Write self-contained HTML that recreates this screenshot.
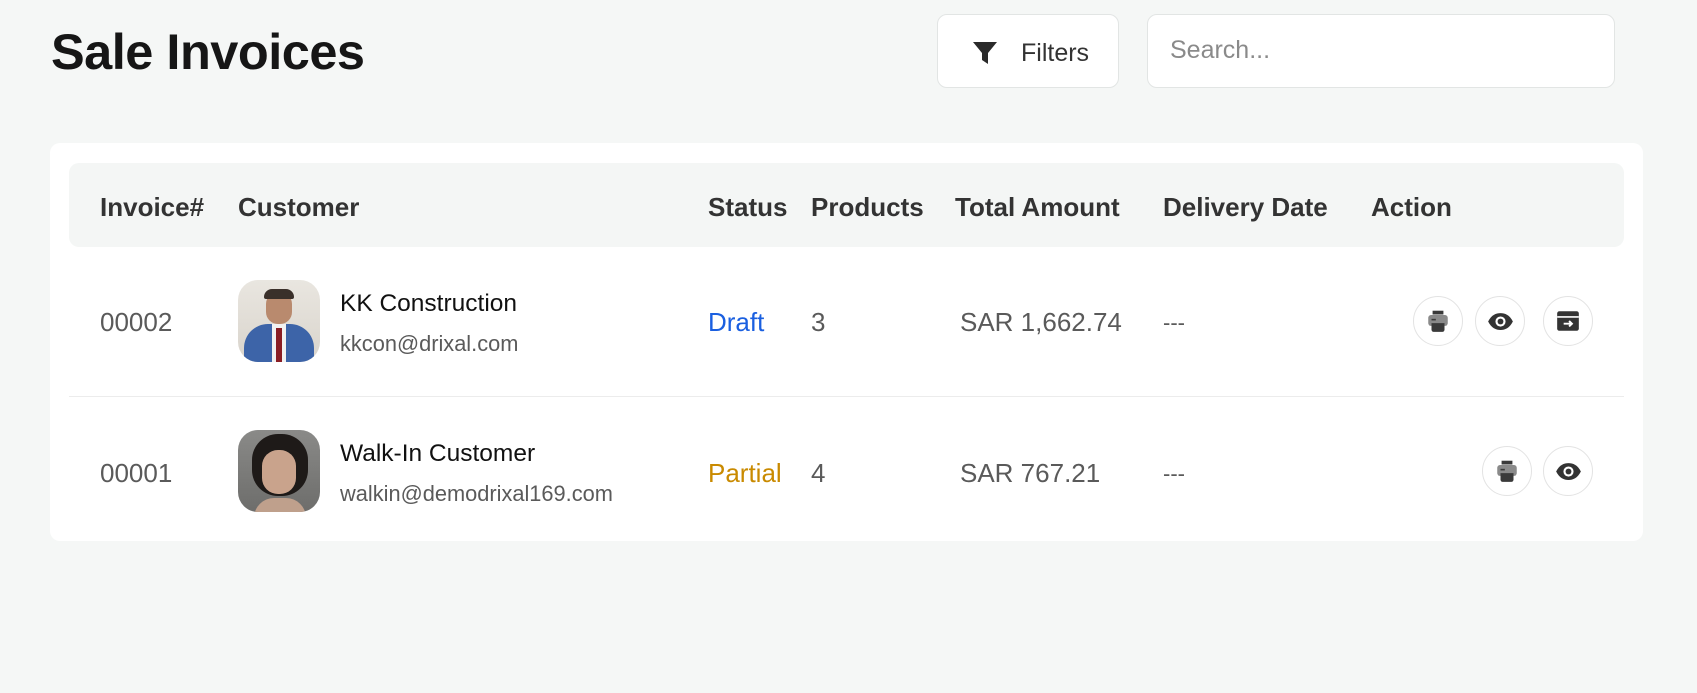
<!DOCTYPE html>
<html><head><meta charset="utf-8"><style>
*{box-sizing:border-box;margin:0;padding:0}
body{width:1697px;height:693px;background:#f5f7f6;font-family:"Liberation Sans",Arial,sans-serif;position:relative;overflow:hidden}
.abs{position:absolute}
h1{position:absolute;left:51px;top:22px;font-size:50.5px;font-weight:700;color:#161616;letter-spacing:-0.5px}
.btn{position:absolute;left:937px;top:14px;width:182px;height:74px;background:#fff;border:1px solid #e2e5e4;border-radius:10px}
.search{position:absolute;left:1147px;top:14px;width:468px;height:74px;background:#fff;border:1px solid #e2e5e4;border-radius:10px;font-size:25px;color:#8a8a8a;padding:21px 22px}
.card{position:absolute;left:50px;top:143px;width:1593px;height:398px;background:#fff;border-radius:10px}
.thead{position:absolute;left:69px;top:163px;width:1555px;height:84px;background:#f4f6f5;border-radius:10px}
.th{position:absolute;top:192px;font-size:26px;font-weight:700;color:#333}
.td{position:absolute;font-size:26px;color:#5a5a5a}
.av{position:absolute;left:238px;width:82px;height:82px;border-radius:20px;overflow:hidden}
.name{position:absolute;left:340px;font-size:24.5px;color:#111}
.mail{position:absolute;left:340px;font-size:21.8px;color:#5a5a5a}
.circ{position:absolute;width:50px;height:50px;border:1px solid #e3e3e3;border-radius:50%;background:#fff;display:flex;align-items:center;justify-content:center}
</style></head><body>
<h1>Sale Invoices</h1>
<div class="btn">
<svg class="abs" style="left:34px;top:26px" width="26" height="24" viewBox="0 0 26 24"><path d="M1 1H25L16 12V23L10 19V12Z" fill="#2a2a2a"/></svg>
<span class="abs" style="left:83px;top:24px;font-size:25px;color:#333">Filters</span>
</div>
<div class="search">Search...</div>
<div class="card"></div>
<div class="thead"></div>
<div class="th" style="left:100px">Invoice#</div>
<div class="th" style="left:238px">Customer</div>
<div class="th" style="left:708px">Status</div>
<div class="th" style="left:811px">Products</div>
<div class="th" style="left:955px">Total Amount</div>
<div class="th" style="left:1163px">Delivery Date</div>
<div class="th" style="left:1371px">Action</div>

<div class="abs" style="left:69px;top:396px;width:1555px;height:1px;background:#ececec"></div>

<div class="td" style="left:100px;top:307px">00002</div>
<div class="av" style="top:280px;background:linear-gradient(#e9e6e0,#d9d4cc)">
<div class="abs" style="left:28px;top:12px;width:26px;height:32px;border-radius:12px;background:#b98a6e"></div>
<div class="abs" style="left:26px;top:9px;width:30px;height:10px;border-radius:8px 8px 2px 2px;background:#3a302a"></div>
<div class="abs" style="left:6px;top:44px;width:70px;height:50px;border-radius:24px 24px 0 0;background:#3d64a8"></div>
<div class="abs" style="left:34px;top:44px;width:14px;height:40px;background:#f2f2f2"></div>
<div class="abs" style="left:38px;top:48px;width:6px;height:34px;background:#8a1d24"></div>
</div>
<div class="name" style="top:290px">KK Construction</div>
<div class="mail" style="top:331px">kkcon@drixal.com</div>
<div class="td" style="left:708px;top:307px;color:#1a5fe0">Draft</div>
<div class="td" style="left:811px;top:307px">3</div>
<div class="td" style="left:960px;top:307px">SAR 1,662.74</div>
<div class="td" style="left:1163px;top:307px;font-size:22px;top:310px">---</div>

<div class="td" style="left:100px;top:458px">00001</div>
<div class="av" style="top:430px;background:linear-gradient(#8a8a88,#6d6d6b)">
<div class="abs" style="left:14px;top:4px;width:56px;height:62px;border-radius:26px;background:#1e1a18"></div>
<div class="abs" style="left:24px;top:20px;width:34px;height:44px;border-radius:16px;background:#c9a38c"></div>
<div class="abs" style="left:16px;top:68px;width:52px;height:20px;border-radius:20px 20px 0 0;background:#bfa08c"></div>
</div>
<div class="name" style="top:440px">Walk-In Customer</div>
<div class="mail" style="top:481px">walkin@demodrixal169.com</div>
<div class="td" style="left:708px;top:458px;color:#c98a00">Partial</div>
<div class="td" style="left:811px;top:458px">4</div>
<div class="td" style="left:960px;top:458px">SAR 767.21</div>
<div class="td" style="left:1163px;top:461px;font-size:22px">---</div>

<svg width="0" height="0" style="position:absolute"><defs>
<symbol id="pr" viewBox="0 0 24 24"><path d="M7 2.5h10v3.5H7z" fill="#3a3a3a"/><rect x="3" y="6.5" width="18" height="10" rx="2.5" fill="#8a8a8a"/><path d="M6 14h12v6a2 2 0 0 1-2 2H8a2 2 0 0 1-2-2z" fill="#3a3a3a"/><rect x="6" y="10" width="4" height="1.5" fill="#3a3a3a"/></symbol>
<symbol id="ey" viewBox="0 0 24 24"><path d="M1 12C4 6 8 4.5 12 4.5S20 6 23 12C20 18 16 19.5 12 19.5S4 18 1 12Z" fill="#333"/><circle cx="12" cy="12" r="4.5" fill="#fff"/><circle cx="12" cy="12" r="2.6" fill="#333"/></symbol>
<symbol id="cd" viewBox="0 0 24 24"><rect x="2" y="3" width="20" height="18" rx="2" fill="#333"/><rect x="2" y="7.5" width="20" height="1.5" fill="#fff"/><path d="M8 14.5h7.5M13 12l2.6 2.5-2.6 2.5" stroke="#fff" stroke-width="1.8" fill="none"/></symbol>
</defs></svg>
<div class="circ" style="left:1413px;top:296px"><svg width="26" height="26"><use href="#pr"/></svg></div>
<div class="circ" style="left:1475px;top:296px"><svg width="27" height="27"><use href="#ey"/></svg></div>
<div class="circ" style="left:1543px;top:296px"><svg width="26" height="26"><use href="#cd"/></svg></div>
<div class="circ" style="left:1482px;top:446px"><svg width="26" height="26"><use href="#pr"/></svg></div>
<div class="circ" style="left:1543px;top:446px"><svg width="27" height="27"><use href="#ey"/></svg></div>
</body></html>
